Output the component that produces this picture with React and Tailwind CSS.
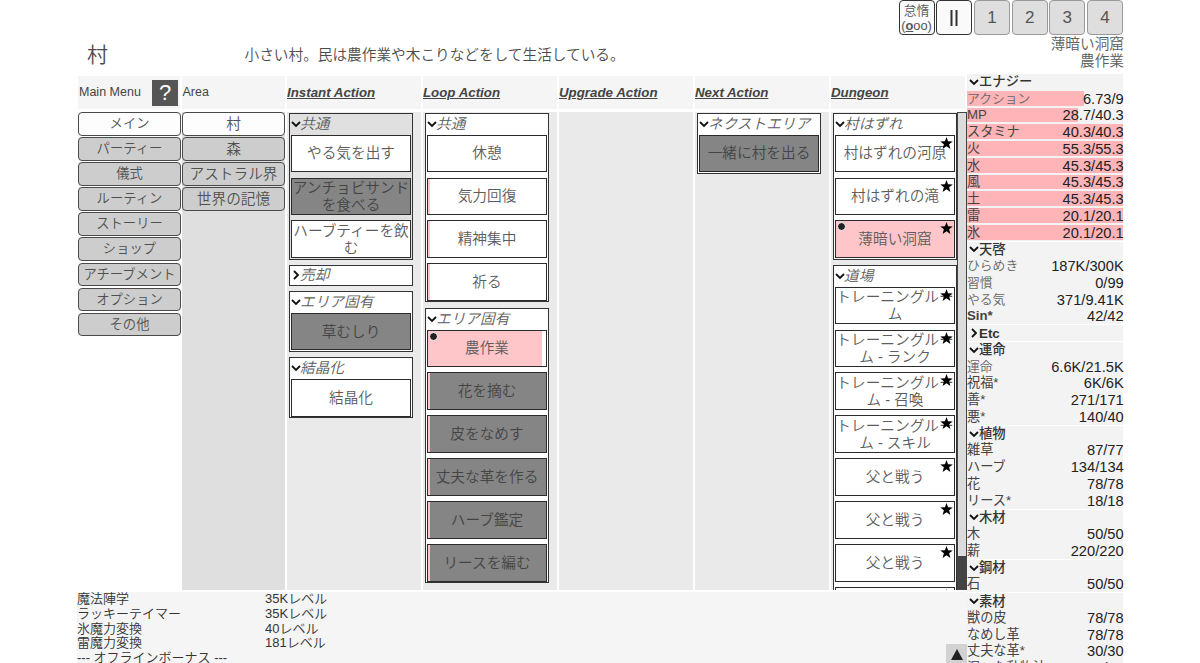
import React, { useState } from 'react';

const menus = ['メイン', 'パーティー', '儀式', 'ルーティン', 'ストーリー', 'ショップ', 'アチーブメント', 'オプション', 'その他'];
const areas = ['村', '森', 'アストラル界', '世界の記憶'];

const columns = [
  {
    title: 'Instant Action',
    groups: [
      {
        name: '共通',
        shaded: true,
        items: [{ name: 'やる気を出す' }, { name: 'アンチョビサンドを食べる', disabled: true }, { name: 'ハーブティーを飲む' }],
      },
      { name: '売却', closed: true, items: [] },
      { name: 'エリア固有', items: [{ name: '草むしり', disabled: true }] },
      { name: '結晶化', items: [{ name: '結晶化' }] },
    ],
  },
  {
    title: 'Loop Action',
    groups: [
      {
        name: '共通',
        items: [
          { name: '休憩' },
          { name: '気力回復', progress: 2 },
          { name: '精神集中', progress: 2 },
          { name: '祈る', progress: 2 },
        ],
      },
      {
        name: 'エリア固有',
        items: [
          { name: '農作業', progress: 97, active: true },
          { name: '花を摘む', progress: 2, disabled: true },
          { name: '皮をなめす', progress: 2, disabled: true },
          { name: '丈夫な革を作る', progress: 2, disabled: true },
          { name: 'ハーブ鑑定', progress: 2, disabled: true },
          { name: 'リースを編む', progress: 2, disabled: true },
        ],
      },
    ],
  },
  { title: 'Upgrade Action', groups: [] },
  {
    title: 'Next Action',
    groups: [{ name: 'ネクストエリア', items: [{ name: '一緒に村を出る', disabled: true }] }],
  },
  {
    title: 'Dungeon',
    scroll: true,
    groups: [
      {
        name: '村はずれ',
        items: [
          { name: '村はずれの河原', star: true },
          { name: '村はずれの滝', star: true },
          { name: '薄暗い洞窟', star: true, progress: 100, active: true },
        ],
      },
      {
        name: '道場',
        items: [
          { name: 'トレーニングルーム', star: true },
          { name: 'トレーニングルーム - ランク', star: true },
          { name: 'トレーニングルーム - 召喚', star: true },
          { name: 'トレーニングルーム - スキル', star: true },
          { name: '父と戦う', star: true },
          { name: '父と戦う', star: true },
          { name: '父と戦う', star: true },
          { name: '', star: true },
        ],
      },
    ],
  },
];

const resources = [
  {
    name: 'エナジー',
    rows: [
      ['アクション', '6.73/9', 74.8],
      ['MP', '28.7/40.3', 71.2],
      ['スタミナ', '40.3/40.3', 100],
      ['火', '55.3/55.3', 100],
      ['水', '45.3/45.3', 100],
      ['風', '45.3/45.3', 100],
      ['土', '45.3/45.3', 100],
      ['雷', '20.1/20.1', 100],
      ['氷', '20.1/20.1', 100],
    ],
  },
  { name: '天啓', rows: [['ひらめき', '187K/300K'], ['習慣', '0/99'], ['やる気', '371/9.41K'], ['Sin*', '42/42']] },
  { name: 'Etc', closed: true, rows: [] },
  { name: '運命', rows: [['運命', '6.6K/21.5K'], ['祝福*', '6K/6K'], ['善*', '271/171'], ['悪*', '140/40']] },
  { name: '植物', rows: [['雑草', '87/77'], ['ハーブ', '134/134'], ['花', '78/78'], ['リース*', '18/18']] },
  { name: '木材', rows: [['木', '50/50'], ['薪', '220/220']] },
  { name: '鋼材', rows: [['石', '50/50']] },
  { name: '素材', rows: [['獣の皮', '78/78'], ['なめし革', '78/78'], ['丈夫な革*', '30/30'], ['湿った動物油', '30/30']] },
];

// names shown in a lighter weight
const lightNames = ['アクション', 'ひらめき', '習慣', 'やる気', '運命'];

const logs = [
  ['魔法陣学', '35K'],
  ['ラッキーテイマー', '35K'],
  ['氷魔力変換', '40'],
  ['雷魔力変換', '181'],
];

const Chevron = ({ closed }) => (
  <svg className="w-[10px] h-[10px] shrink-0" viewBox="0 0 10 10" fill="none" stroke="#111" strokeWidth="1.8">
    <path d={closed ? 'M3 1 L7 5 L3 9' : 'M1 3 L5 7 L9 3'} />
  </svg>
);

const Star = () => (
  <svg className="absolute right-[1px] top-[1px] w-[13px] h-[12px]" viewBox="0 0 24 23" fill="#000">
    <path d="M12 0 L15 8.2 L24 8.5 L17 14 L19.5 23 L12 17.8 L4.5 23 L7 14 L0 8.5 L9 8.2 Z" />
  </svg>
);

const MenuButton = ({ label, selected, small, onClick }) => (
  <button
    onClick={onClick}
    className={`h-[23.5px] w-full shrink-0 rounded-[4px] border border-[#4a4a4a] pt-px font-[350] leading-[20.5px] whitespace-nowrap text-[#505050] ${
      small ? 'text-[13.33px]' : 'text-[14.67px]'
    } ${selected ? 'bg-[#fdfdfd]' : 'bg-[#cdcdcd]'}`}
  >
    {label}
  </button>
);

const ActionButton = ({ item }) => (
  <button
    className={`relative flex h-[37.6px] w-full shrink-0 items-center justify-center border border-[#2b2b2b] pt-px text-[14.67px] font-[350] leading-[17px] ${
      item.disabled ? 'bg-[#858585] text-[#444]' : 'bg-white text-[#5c5c5c]'
    }`}
  >
    {item.progress && (
      <span className="absolute inset-y-0 left-0 bg-[#ffc6c9]" style={{ width: `${item.progress}%` }} />
    )}
    <span className="relative -mx-px break-all">{item.name}</span>
    {item.active && (
      <span className="absolute left-[1px] top-[1px] h-[9px] w-[9px] rounded-full border border-white bg-[#222]" />
    )}
    {item.star && <Star />}
  </button>
);

const Group = ({ group }) => {
  const [closed, setClosed] = useState(!!group.closed);
  return (
    <div
      className={`w-[124px] shrink-0 border border-[#333] px-px ${closed ? '' : 'pb-[0.5px]'} ${
        group.shaded ? 'bg-[#e0e0e0]' : 'bg-white'
      }`}
    >
      <div
        onClick={() => setClosed(!closed)}
        className={`flex items-center text-[14.67px] font-[350] italic leading-[18px] text-[#5c5c5c] ${
          closed ? 'h-[18.5px]' : 'h-[20.5px] pb-px'
        }`}
      >
        <Chevron closed={closed} />
        <span className="-ml-px">{group.name}</span>
      </div>
      {!closed && (
        <div className="flex flex-col gap-[5.3px]">
          {group.items.map((item, i) => (
            <ActionButton key={i} item={item} />
          ))}
        </div>
      )}
    </div>
  );
};

const SpeedButton = ({ label, selected }) => (
  <button
    className={`h-[35px] w-[36px] rounded-[4px] border pt-px text-[17px] ${
      selected ? 'border-[#333] bg-[#fafafa] text-[#333]' : 'border-[#999] bg-[#dedede] text-[#555]'
    }`}
  >
    {label}
  </button>
);

const ResourcePanel = () => (
  <div className="flex w-[156px] shrink-0 flex-col">
    {resources.map((group, g) => (
      <div key={g} className="bg-[#f3f3f3]">
        <div className="flex h-[16.76px] items-center border-t border-white pl-[2px] text-[13.33px] font-medium leading-[15px] text-[#333]">
          <Chevron closed={group.closed} />
          <span className={group.closed ? 'font-bold' : ''}>{group.name}</span>
        </div>
        {group.rows.map(([name, value, percent]) => (
          <div key={name} className="relative flex h-[16.76px] items-center justify-between whitespace-nowrap pt-px leading-[16px]">
            {percent && (
              <span className="absolute bottom-px left-0 top-px bg-[#ffb4b7]" style={{ width: `${percent}%` }} />
            )}
            <span
              className={`relative ${
                name === 'Sin*'
                  ? 'text-[13.2px] font-bold text-[#444]'
                  : lightNames.includes(name)
                    ? 'text-[12.8px] font-[350] text-[#666]'
                    : 'text-[13.2px] text-[#444]'
              }`}
            >
              {name}
            </span>
            <span className="relative -mr-[0.7px] text-[14.67px] text-[#222]">{value}</span>
          </div>
        ))}
      </div>
    ))}
  </div>
);

const App = () => {
  const [menu, setMenu] = useState(0);
  const [area, setArea] = useState(0);

  return (
    <div
      lang="ja"
      className="h-[663px] w-[1200px] overflow-hidden bg-white pl-[77px] font-['Liberation_Sans','Noto_Sans_CJK_JP',sans-serif]"
    >
      <div className="flex h-[73px] w-[1047px] justify-between">
        <div className="flex items-center pl-[10px] pt-[37px] font-[350] text-[#4c4c4c]">
          <span className="w-[157.5px] text-[21px] leading-[30px]">村</span>
          <span className="text-[14.67px]">小さい村。民は農作業や木こりなどをして生活している。</span>
        </div>
        <div className="flex flex-col items-end">
          <div className="flex gap-[1.7px] pr-px">
            <button className="h-[35px] w-[36px] rounded-[4px] border border-[#333] bg-[#fafafa] text-[12.8px] leading-[15px] text-[#555]">
              <span className="font-[350]">怠惰</span>
              <br />
              (<b className="underline">o</b>oo)
            </button>
            <SpeedButton
              selected
              label={
                <svg className="mx-auto h-[16px] w-[8px]" viewBox="0 0 8 16" fill="none" stroke="#333" strokeWidth="2">
                  <path d="M1.5 0 V16 M6.5 0 V16" />
                </svg>
              }
            />
            <SpeedButton label="1" />
            <SpeedButton label="2" />
            <SpeedButton label="3" />
            <SpeedButton label="4" />
          </div>
          <div className="pt-px text-right text-[14.67px] font-[350] leading-[17px] text-[#5c5c5c]">
            <p>薄暗い洞窟</p>
            <p>農作業</p>
          </div>
        </div>
      </div>

      <div className="flex">
        <div className="flex w-[890px] shrink-0 flex-col pt-[3px]">
          <div className="flex h-[33px] text-[12.5px] leading-[33px] text-[#444]">
            <div className="ml-px mr-[2px] flex w-[102px] items-center justify-between bg-[#f5f5f5] pl-px pr-[2px]">
              <span>Main Menu</span>
              <button className="h-[26px] w-[26px] bg-[#555] text-[22px] leading-[26px] text-white">?</button>
            </div>
            <div className="mr-[2px] w-[103px] bg-[#f5f5f5] pl-[0.5px]">Area</div>
            {columns.map((col) => (
              <div key={col.title} className="mr-[2px] w-[134px] bg-[#f5f5f5] text-[13.3px] font-bold italic underline">
                {col.title}
              </div>
            ))}
          </div>

          <div className="mt-[3px] flex h-[478px]">
            <div className="flex w-[105px] flex-col gap-[1.6px] pl-px pr-[1px]">
              {menus.map((name, i) => (
                <MenuButton key={name} small label={name} selected={menu === i} onClick={() => setMenu(i)} />
              ))}
            </div>
            <div className="mr-[2px] flex w-[103px] flex-col gap-[1.6px] bg-[#dfdfdf]">
              {areas.map((name, i) => (
                <MenuButton key={name} label={name} selected={area === i} onClick={() => setArea(i)} />
              ))}
            </div>
            {columns.map((col) => (
              <div
                key={col.title}
                className={`flex h-[478px] overflow-hidden bg-[#eaeaea] ${col.scroll ? 'w-[136px]' : 'mr-[2px] w-[134px]'}`}
              >
                <div className="flex flex-1 flex-col gap-[5.6px] pl-[2px] pt-[1.2px]">
                  {col.groups.map((group, i) => (
                    <Group key={i} group={group} />
                  ))}
                </div>
                {col.scroll && (
                  <div className="flex w-[10px] flex-col justify-end border-x border-t border-[#444] bg-[#dcdcdc]">
                    <div className="h-[34px] bg-[#444]" />
                  </div>
                )}
              </div>
            ))}
          </div>

          <div className="relative mt-[2px] h-[72px] bg-[#f5f5f5] text-[13px] font-[350] leading-[14.8px] text-[#333]">
            {logs.map(([name, level]) => (
              <div key={name} className="flex">
                <span className="w-[188px]">{name}</span>
                <span>{level}レベル</span>
              </div>
            ))}
            <div>--- オフラインボーナス ---</div>
            <button className="absolute right-0 top-[52px] flex h-[20px] w-[21px] items-center justify-center bg-[#d2d2d2]">
              <svg className="h-[11px] w-[12px]" viewBox="0 0 12 11" fill="#222">
                <path d="M6 0 L12 11 H0 Z" />
              </svg>
            </button>
          </div>
        </div>

        <ResourcePanel />
      </div>
    </div>
  );
};

export default App;
